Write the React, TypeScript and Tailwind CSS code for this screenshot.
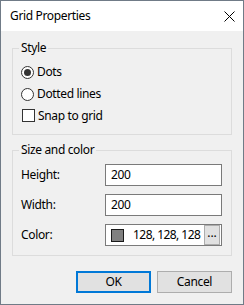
import React from "react";

function Radio({ checked, label }: { checked?: boolean; label: string }) {
  return (
    <div className="flex items-center h-[22px]">
      <span className="w-[13px] h-[13px] rounded-full border border-[#333333] bg-white flex items-center justify-center">
        {checked && <span className="w-[7px] h-[7px] rounded-full bg-[#333333]" />}
      </span>
      <span className="ml-[3px]">{label}</span>
    </div>
  );
}

function Field({ label, children }: { label: string; children: React.ReactNode }) {
  return (
    <div className="flex items-center h-[22px]">
      <span className="w-[84px]">{label}</span>
      <div className="flex-1 h-[22px] border border-[#7a7a7a] bg-white flex items-center pl-[5px] whitespace-nowrap">
        {children}
      </div>
    </div>
  );
}

export default function App() {
  return (
    <div
      className="w-[244px] h-[305px] border border-[#707b87] bg-[#f0f0f0] flex flex-col text-[12px] tracking-[-0.35px] text-black"
      style={{ fontFamily: '"Noto Sans", "Open Sans", sans-serif' }}
    >
      <div className="h-[30px] bg-white flex items-center justify-between pl-[9px] pr-[9px]">
        <span className="text-[12px]">Grid Properties</span>
        <svg width="11" height="11" viewBox="0 0 11 11" className="mr-[-1px]">
          <path d="M0.5 0.5 L10.5 10.5 M10.5 0.5 L0.5 10.5" stroke="#000" strokeWidth="1" />
        </svg>
      </div>
      <div className="flex flex-col px-[11px] pt-[9px]">
        <fieldset className="border border-[#dcdcdc] px-0">
          <legend className="ml-[6px] px-[2px] leading-[16px]">Style</legend>
          <div className="flex flex-col pl-[8px] pt-[5px] pb-[8px]">
            <Radio checked label="Dots" />
            <Radio label="Dotted lines" />
            <div className="flex items-center h-[21px]">
              <span className="w-[13px] h-[13px] border border-[#333333] bg-white ml-[1px]" />
              <span className="ml-[3px]">Snap to grid</span>
            </div>
          </div>
        </fieldset>
        <fieldset className="border border-[#dcdcdc] px-0 mt-[7px]">
          <legend className="ml-[6px] px-[2px] leading-[16px]">Size and color</legend>
          <div className="flex flex-col gap-[8px] pl-[8px] pr-[9px] pt-[6px] pb-[9px]">
            <Field label="Height:">200</Field>
            <Field label="Width:">200</Field>
            <Field label="Color:">
              <span className="w-[13px] h-[13px] shrink-0 border border-[#1a1a1a] bg-[#808080]" />
              <span className="ml-[9px] flex-1 tracking-[-0.55px]">128, 128, 128</span>
              <span className="w-[16px] h-[20px] shrink-0 bg-[#e1e1e1] border border-[#adadad] flex items-center justify-center leading-none pb-[4px] mr-[1px] tracking-normal">
                ...
              </span>
            </Field>
          </div>
        </fieldset>
        <div className="flex justify-end gap-[6px] mt-[15px]">
          <button className="w-[75px] h-[22px] bg-[#e1e1e1] border-2 border-[#0078d7] flex items-center justify-center">
            OK
          </button>
          <button className="w-[75px] h-[22px] bg-[#e1e1e1] border border-[#adadad] flex items-center justify-center">
            Cancel
          </button>
        </div>
      </div>
    </div>
  );
}
